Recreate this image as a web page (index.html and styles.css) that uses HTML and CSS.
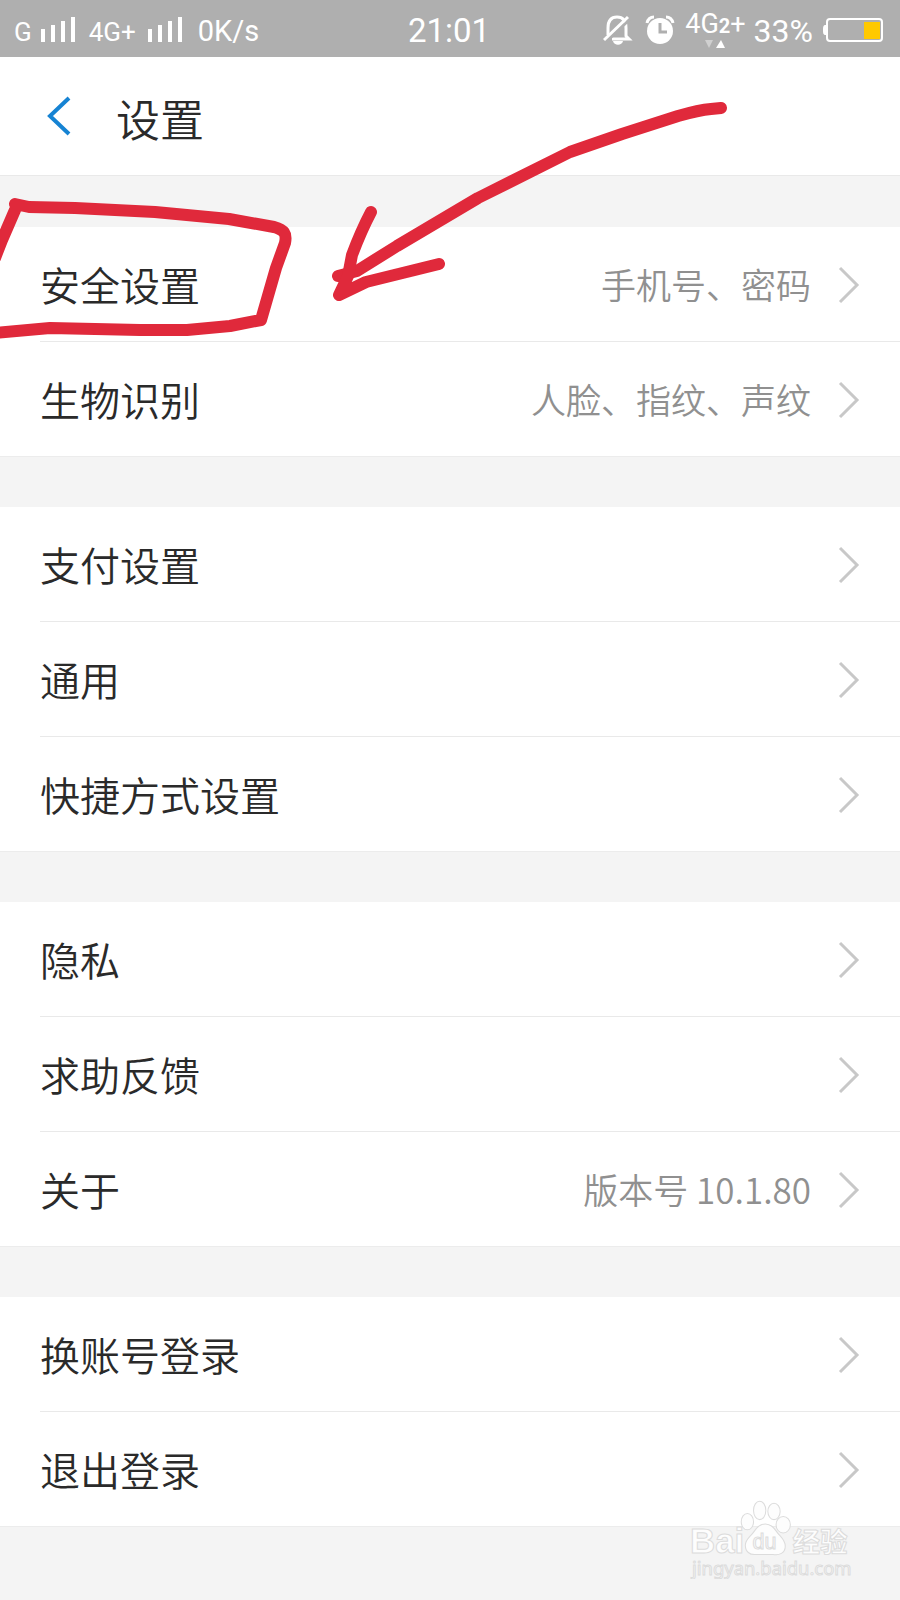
FILE: index.html
```html
<!DOCTYPE html>
<html lang="zh-CN">
<head>
<meta charset="utf-8">
<meta name="viewport" content="width=device-width, initial-scale=1">
<title>设置</title>
<link rel="stylesheet" href="styles.css">
</head>
<body>
<div class="status">
  <div class="status-side">
    <span class="net">G</span>
    <svg class="signal" viewBox="0 0 36 26" aria-hidden="true"><path d="M1 12h4v13H1zM11 8h4v17h-4zM21 4h4v21h-4zM31 0h4v25h-4z"/></svg>
    <span class="net net-wide">4G+</span>
    <svg class="signal" viewBox="0 0 36 26" aria-hidden="true"><path d="M1 12h4v13H1zM11 8h4v17h-4zM21 4h4v21h-4zM31 0h4v25h-4z"/></svg>
    <span class="rate">0K/s</span>
  </div>
  <time class="clock">21:01</time>
  <div class="status-side status-right">
    <svg class="bell" viewBox="0 0 30 30" aria-hidden="true">
      <path d="M5 20V13C5 6 8 2 14 2s9 4 9 11v8l3 3H9" fill="none" stroke="#fff" stroke-width="3"/>
      <path d="M3 27 27 4" stroke="#afafaf" stroke-width="3"/>
      <path d="M1 25 25 2" stroke="#fff" stroke-width="3"/>
      <path d="M10 26h10c-1 5-9 5-10 0z" fill="#fff"/>
    </svg>
    <svg class="alarm" viewBox="0 0 30 30" aria-hidden="true">
      <circle cx="15" cy="16" r="13" fill="#fff"/>
      <path d="M2 8C3 4 5 2 9 2M28 8c-1-4-3-6-7-6" fill="none" stroke="#fff" stroke-width="3"/>
      <path d="M15 8v9h7" fill="none" stroke="#afafaf" stroke-width="3"/>
    </svg>
    <div class="data">
      <span class="data-label">4G<b>2</b>+</span>
      <svg class="data-arrows" viewBox="0 0 20 8" aria-hidden="true"><path d="M0 0h8L4 8z" fill="#d0d0d0"/><path d="M11 8h9l-4-8z" fill="#fff"/></svg>
    </div>
    <span class="percent">33%</span>
    <svg class="battery" viewBox="0 0 62 26" aria-hidden="true">
      <path d="M4 8C1 8 1 10 1 13s0 5 3 5z" fill="#fff"/>
      <rect x="5" y="2" width="55" height="22" rx="3" fill="none" stroke="#fff" stroke-width="2"/>
      <path d="M42 5h16v17H42z" fill="#ffc900"/>
    </svg>
  </div>
</div>
<header class="header">
  <button class="back" type="button" aria-label="返回"><svg viewBox="0 0 26 40" aria-hidden="true"><path d="M24 2 5 20l19 18"/></svg></button>
  <h1 class="title">设置</h1>
</header>
<main class="groups">
  <nav class="group">
    <a class="row" href="#security"><span class="label">安全设置</span><span class="value">手机号、密码</span><svg class="chevron" viewBox="0 0 22 38" aria-hidden="true"><path d="m2 2 17 17L2 36"/></svg></a>
    <a class="row" href="#biometric"><span class="label">生物识别</span><span class="value">人脸、指纹、声纹</span><svg class="chevron" viewBox="0 0 22 38" aria-hidden="true"><path d="m2 2 17 17L2 36"/></svg></a>
  </nav>
  <nav class="group">
    <a class="row" href="#payment"><span class="label">支付设置</span><svg class="chevron" viewBox="0 0 22 38" aria-hidden="true"><path d="m2 2 17 17L2 36"/></svg></a>
    <a class="row" href="#general"><span class="label">通用</span><svg class="chevron" viewBox="0 0 22 38" aria-hidden="true"><path d="m2 2 17 17L2 36"/></svg></a>
    <a class="row" href="#shortcuts"><span class="label">快捷方式设置</span><svg class="chevron" viewBox="0 0 22 38" aria-hidden="true"><path d="m2 2 17 17L2 36"/></svg></a>
  </nav>
  <nav class="group">
    <a class="row" href="#privacy"><span class="label">隐私</span><svg class="chevron" viewBox="0 0 22 38" aria-hidden="true"><path d="m2 2 17 17L2 36"/></svg></a>
    <a class="row" href="#feedback"><span class="label">求助反馈</span><svg class="chevron" viewBox="0 0 22 38" aria-hidden="true"><path d="m2 2 17 17L2 36"/></svg></a>
    <a class="row" href="#about"><span class="label">关于</span><span class="value">版本号 10.1.80</span><svg class="chevron" viewBox="0 0 22 38" aria-hidden="true"><path d="m2 2 17 17L2 36"/></svg></a>
  </nav>
  <nav class="group">
    <a class="row" href="#switch"><span class="label">换账号登录</span><svg class="chevron" viewBox="0 0 22 38" aria-hidden="true"><path d="m2 2 17 17L2 36"/></svg></a>
    <a class="row" href="#logout"><span class="label">退出登录</span><svg class="chevron" viewBox="0 0 22 38" aria-hidden="true"><path d="m2 2 17 17L2 36"/></svg></a>
  </nav>
</main>
<svg class="marks" viewBox="0 0 900 360" aria-hidden="true">
  <path d="M-5 258 2 240 15 210M15 204l14 3 46 1 80 4 74 7 45 8c10 3 13 6 11 16l-9 25-15 52-31 6-43 4H140l-90-2-55 5"/>
  <path d="m721 108-10 1q-12 1-33 7l-56 18-52 18-92 46-81 48-40 25-19 5"/>
  <path d="m371 212q-10 19-19 43l-4 21-9 19 27-13 73-18"/>
</svg>
<svg class="watermark" viewBox="0 0 164 84" role="img" aria-label="Baidu 经验">
  <g fill="#fdfdfd" stroke="#dcdcdc">
    <ellipse cx="56" cy="28" rx="6" ry="8"/><ellipse cx="68" cy="17" rx="6" ry="9"/><ellipse cx="82" cy="18" rx="6" ry="8"/><ellipse cx="91" cy="31" rx="7" ry="8"/>
    <path d="M54 51C54 45 59 43 63 37c6-9 15-9 21 0 4 6 9 8 9 15 0 7-6 9-12 8H65c-7 1-11-3-11-9z"/>
    <text class="wm-brand" x="0" y="59">Bai</text>
    <text class="wm-du" x="61" y="55">du</text>
    <text class="wm-cn" x="100" y="58">经验</text>
    <text class="wm-url" x="2" y="80">jingyan.baidu.com</text>
  </g>
</svg>
</body>
</html>
```
FILE: styles.css
```css
* { box-sizing: border-box; }
body {
  position: relative;
  min-height: 100vh;
  margin: 0;
  background: #f4f4f4;
  color: #2a2a2a;
  font-family: "Noto Sans CJK SC", "Noto Sans", sans-serif;
  font-weight: 350;
  overflow-x: hidden;
}
.status {
  display: grid;
  grid-template-columns: 1fr auto 1fr;
  align-items: center;
  height: 57px;
  padding: 0 16px 0 14px;
  background: #afafaf;
  color: #fff;
  font-family: Roboto, sans-serif;
  font-weight: 400;
  line-height: 32px;
}
.status-side { display: flex; align-items: center; padding-top: 2px; }
.status-right { justify-content: flex-end; }
.net { margin-right: 8px; padding-top: 4px; font-size: 26px; }
.net-wide { margin-left: 13px; margin-right: 11px; }
.signal { width: 36px; height: 26px; fill: #fff; }
.rate { margin-left: 15px; padding-top: 2px; font-size: 29px; }
.clock { padding-top: 4px; font-size: 33px; }
.bell, .alarm { width: 30px; height: 30px; }
.alarm { margin-left: 12px; }
.data { display: flex; flex-direction: column; align-items: center; margin-left: 10px; }
.data-label { font-size: 27px; line-height: 24px; }
.data-label b { font-size: 20px; }
.data-arrows { width: 20px; height: 8px; margin-top: 2px; }
.percent { margin-left: 8px; padding-top: 2px; font-size: 32px; }
.battery { width: 62px; height: 26px; margin-left: 9px; }
.header {
  display: flex;
  align-items: center;
  gap: 40px;
  height: 119px;
  padding: 0 40px;
  background: #fff;
  border-bottom: 1px solid #e9e9e9;
}
.back { display: flex; padding: 0 5px; border: 0; background: none; }
.back svg { width: 26px; height: 40px; fill: none; stroke: #1683d3; stroke-width: 4; }
.title { margin: 0; padding-top: 4px; font-size: 44px; font-weight: inherit; line-height: 60px; }
.groups { display: flex; flex-direction: column; gap: 50px; padding-top: 51px; }
.group { background: #fff; border-bottom: 1px solid #ececec; }
.row {
  display: flex;
  align-items: center;
  height: 114px;
  padding: 2px 40px 0 0;
  margin-left: 40px;
  color: inherit;
  text-decoration: none;
}
.row + .row { height: 115px; border-top: 1px solid #e9e9e9; }
.label { flex: 1; font-size: 40px; line-height: 54px; padding-bottom: 2px; }
.value { margin-right: 27px; color: #909090; font-size: 35px; line-height: 54px; padding-bottom: 2px; }
.chevron { width: 22px; height: 38px; fill: none; stroke: #c8c8c8; stroke-width: 3; }
.marks {
  position: absolute;
  top: 0;
  left: 0;
  width: 900px;
  height: 360px;
  fill: none;
  stroke: #e0293b;
  stroke-width: 12;
  stroke-linecap: round;
  stroke-linejoin: round;
  pointer-events: none;
}
.watermark { position: absolute; right: 42px; bottom: 21px; width: 168px; height: 86px; }
.wm-brand { font: 700 34px "Liberation Sans", sans-serif; }
.wm-du { font: 400 21px "Liberation Sans", sans-serif; }
.wm-cn { font: 700 27px "Noto Sans CJK SC", sans-serif; }
.wm-url { font: 400 18px "Noto Sans", sans-serif; }
```
